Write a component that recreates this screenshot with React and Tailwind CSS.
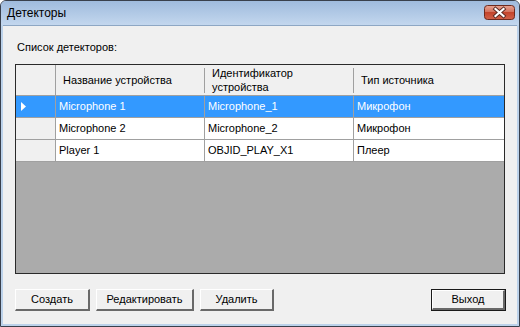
const columns = [
  { key: "name", label: "Название устройства", width: "w-[149px]" },
  { key: "id", label: "Идентификатор устройства", width: "w-[149px]" },
  { key: "type", label: "Тип источника", width: "w-[150px]" },
];

const rows = [
  { name: "Microphone 1", id: "Microphone_1", type: "Микрофон" },
  { name: "Microphone 2", id: "Microphone_2", type: "Микрофон" },
  { name: "Player 1", id: "OBJID_PLAY_X1", type: "Плеер" },
];

const CloseGlyph = () => (
  <svg width="31" height="15" viewBox="0 0 31 15">
    <defs>
      <linearGradient id="closeBg" x1="0" y1="0" x2="0" y2="1">
        <stop offset="0" stopColor="#e8a493" />
        <stop offset="0.45" stopColor="#d4735e" />
        <stop offset="0.5" stopColor="#c4452c" />
        <stop offset="1" stopColor="#d2624a" />
      </linearGradient>
    </defs>
    <rect x="0.5" y="0.5" width="30" height="14" rx="3" fill="url(#closeBg)" stroke="#6d2a1e" />
    <path d="M11.5 4 L19.5 11 M19.5 4 L11.5 11" stroke="#5a2a22" strokeWidth="4" strokeLinecap="square" />
    <path d="M11.5 4 L19.5 11 M19.5 4 L11.5 11" stroke="#ffffff" strokeWidth="2.2" strokeLinecap="square" />
  </svg>
);

const WinButton = ({ children, width, isDefault }) => (
  <button
    type="button"
    className={`${width} h-[22px] ${isDefault ? "border border-[#1a1a1a]" : ""} bg-[#f0f0f0] text-[11px] text-black`}
  >
    <span className="flex h-full w-full items-center justify-center border-b-2 border-l border-r-2 border-t border-b-[#696969] border-l-white border-r-[#696969] border-t-white">
      {children}
    </span>
  </button>
);

export default function App() {
  return (
    <div
      className="flex h-[327px] w-[520px] flex-col overflow-hidden rounded-t-[6px] border border-[#39404c] bg-[#bcd2ea]"
      style={{ fontFamily: '"Liberation Sans", Arial, sans-serif' }}
    >
      <div className="flex h-[24px] shrink-0 items-center justify-between bg-gradient-to-b from-[#9fbbdd] to-[#c3d7ee] pl-[6px] pr-[4px]">
        <span className="text-[12px] text-black">Детекторы</span>
        <div className="mt-[-2px]">
          <CloseGlyph />
        </div>
      </div>

      <div className="mx-[2px] mb-[2px] flex flex-1 flex-col border-t border-[#8ea7c4] bg-[#f0f0f0] px-[12px]">
        <div className="pt-[15px] pl-[2px] text-[11px] leading-[13px] text-black">Список детекторов:</div>

        <div className="mt-[10px] flex h-[210px] w-[490px] flex-col border border-[#2a2a2a] bg-[#ababab] text-[11px]">
          <div className="flex h-[31px] border-b border-[#a0a0a0] bg-[#f0f0f0]">
            <div className="w-[40px] border-r border-[#a0a0a0]" />
            {columns.map((col, i) => (
              <div key={col.key} className={`relative flex ${col.width} items-center pl-[7px] leading-[14px]`}>
                {i > 0 ? <span className="absolute left-[-1px] top-[3px] h-[25px] w-px bg-[#a0a0a0]" /> : null}
                <span className={col.key === "id" ? "w-[100px]" : ""}>{col.label}</span>
              </div>
            ))}
          </div>

          {rows.map((row, index) => {
            const selected = index === 0;
            return (
              <div key={row.id} className="flex h-[22px] border-b border-[#a0a0a0]">
                <div
                  className={`flex w-[40px] items-center border-r border-[#a0a0a0] pl-[5px] ${selected ? "bg-[#3399ff]" : "bg-[#f0f0f0]"}`}
                >
                  {selected ? (
                    <svg width="5" height="9" viewBox="0 0 5 9">
                      <path d="M0 0 L5 4.5 L0 9 Z" fill="#ffffff" />
                    </svg>
                  ) : null}
                </div>
                {columns.map((col, i) => (
                  <div
                    key={col.key}
                    className={`flex ${col.width} items-center pl-[3px] ${i < 2 ? "border-r border-[#a0a0a0]" : ""} ${selected ? "bg-[#3399ff] text-white" : "bg-white text-black"}`}
                  >
                    {row[col.key]}
                  </div>
                ))}
              </div>
            );
          })}
        </div>

        <div className="mt-[15px] flex items-start">
          <div className="flex gap-[6px]">
            <WinButton width="w-[75px]">Создать</WinButton>
            <WinButton width="w-[98px]">Редактировать</WinButton>
            <WinButton width="w-[74px]">Удалить</WinButton>
          </div>
          <div className="ml-auto mr-[-1px] flex">
            <WinButton width="w-[75px]" isDefault>
              Выход
            </WinButton>
          </div>
        </div>
      </div>
    </div>
  );
}
